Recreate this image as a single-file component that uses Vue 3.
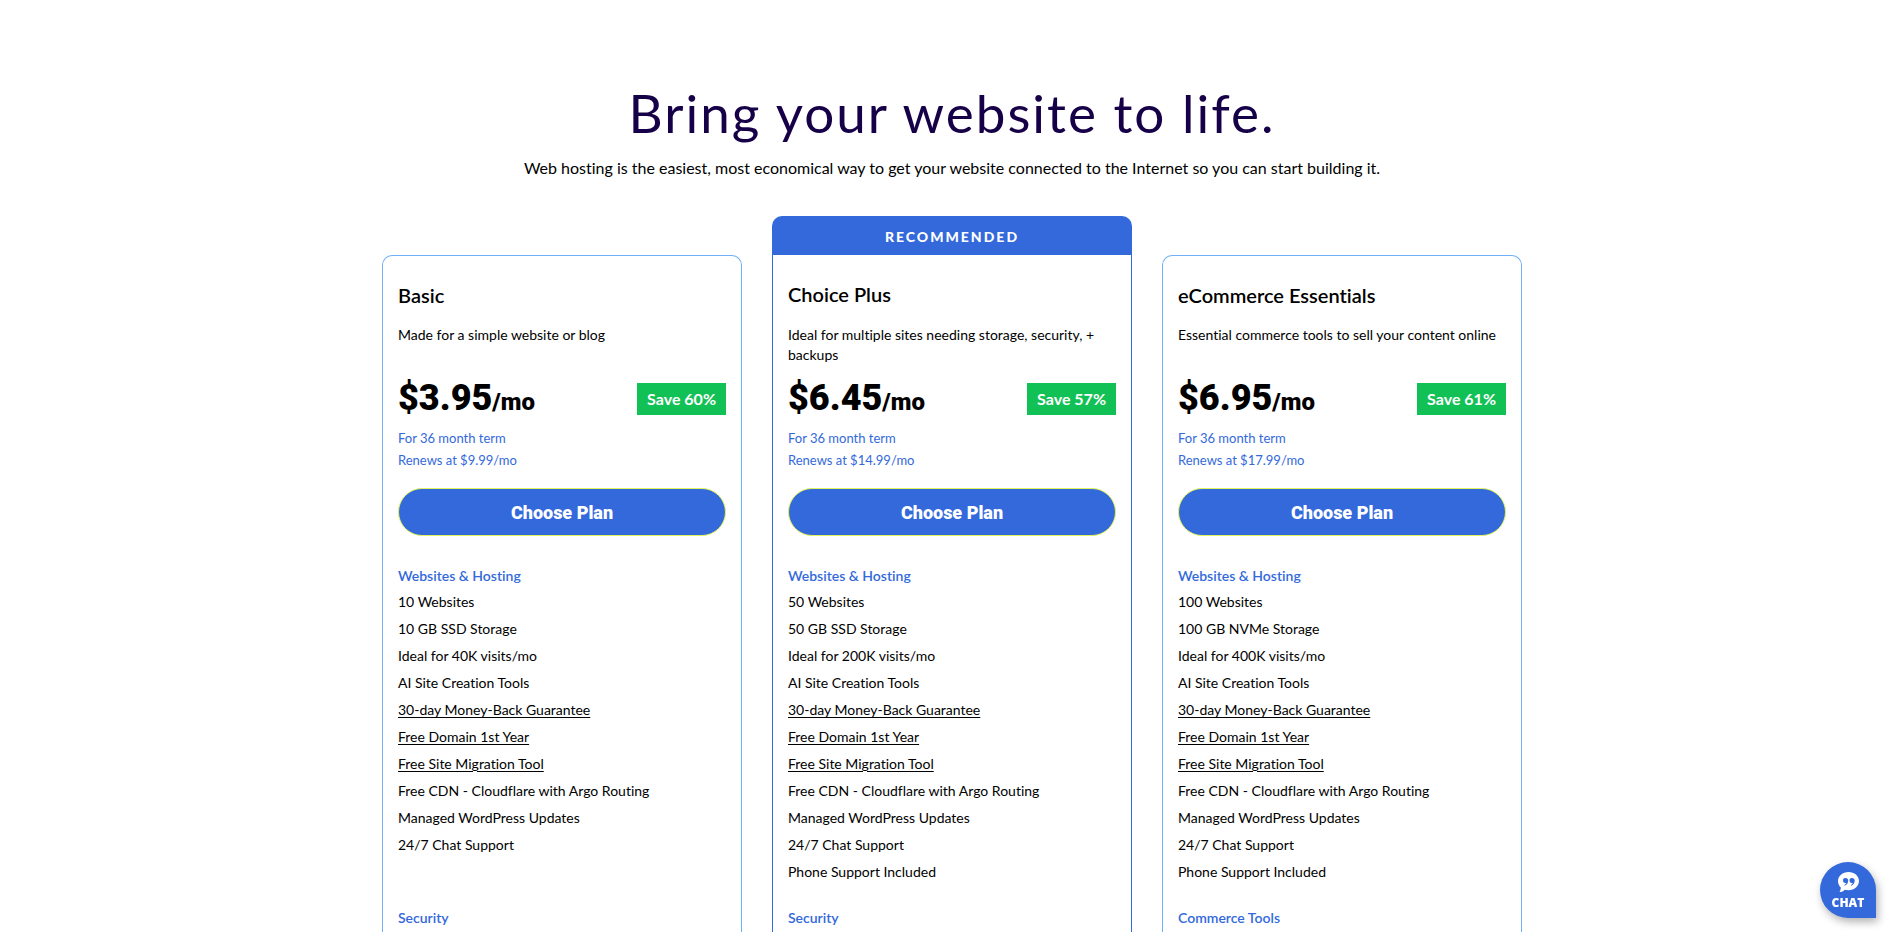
<script setup>
const common = [
  { text: 'AI Site Creation Tools' },
  { text: '30-day Money-Back Guarantee', link: true },
  { text: 'Free Domain 1st Year', link: true },
  { text: 'Free Site Migration Tool', link: true },
  { text: 'Free CDN - Cloudflare with Argo Routing' },
  { text: 'Managed WordPress Updates' },
  { text: '24/7 Chat Support' }
]

const plans = [
  {
    name: 'Basic',
    blurb: 'Made for a simple website or blog',
    price: '$3.95',
    save: 'Save 60%',
    renews: 'Renews at $9.99/mo',
    features: [
      { text: '10 Websites' },
      { text: '10 GB SSD Storage' },
      { text: 'Ideal for 40K visits/mo' },
      ...common
    ],
    next: 'Security'
  },
  {
    name: 'Choice Plus',
    recommended: true,
    blurb: 'Ideal for multiple sites needing storage, security, + backups',
    price: '$6.45',
    save: 'Save 57%',
    renews: 'Renews at $14.99/mo',
    features: [
      { text: '50 Websites' },
      { text: '50 GB SSD Storage' },
      { text: 'Ideal for 200K visits/mo' },
      ...common,
      { text: 'Phone Support Included' }
    ],
    next: 'Security'
  },
  {
    name: 'eCommerce Essentials',
    blurb: 'Essential commerce tools to sell your content online',
    price: '$6.95',
    save: 'Save 61%',
    renews: 'Renews at $17.99/mo',
    features: [
      { text: '100 Websites' },
      { text: '100 GB NVMe Storage' },
      { text: 'Ideal for 400K visits/mo' },
      ...common,
      { text: 'Phone Support Included' }
    ],
    next: 'Commerce Tools'
  }
]
</script>

<template>
  <main class="page">
    <header class="intro">
      <h1>Bring your website to life.</h1>
      <p>Web hosting is the easiest, most economical way to get your website connected to the Internet so you can start building it.</p>
    </header>

    <section class="plans" aria-label="Hosting plans">
      <div v-for="plan in plans" :key="plan.name" class="column">
        <div v-if="plan.recommended" class="ribbon">RECOMMENDED</div>
        <article class="card" :class="{ featured: plan.recommended }">
          <h2>{{ plan.name }}</h2>
          <p class="blurb">{{ plan.blurb }}</p>
          <div class="offer">
            <div class="price">{{ plan.price }}<span>/mo</span></div>
            <div class="save">{{ plan.save }}</div>
          </div>
          <p class="term">For 36 month term</p>
          <p class="term">{{ plan.renews }}</p>
          <button type="button" class="choose">Choose Plan</button>
          <h3>Websites &amp; Hosting</h3>
          <ul class="features">
            <li v-for="f in plan.features" :key="f.text">
              <a v-if="f.link" href="#">{{ f.text }}</a>
              <template v-else>{{ f.text }}</template>
            </li>
          </ul>
          <h3>{{ plan.next }}</h3>
        </article>
      </div>
    </section>

    <button type="button" class="chat">
      <svg viewBox="0 0 22 22" width="22" height="22" aria-hidden="true">
        <path fill="#fff" d="M11.500 1C5.700 1 1 5 1 10c0 2.700 1.100 4.800 2.800 6.500 0 1.600-.5 3-1.300 4.500 2.200 0 4-.9 5.300-2.300 1.200.3 2.400.5 3.700.5C17.300 19.200 22 15.100 22 10S17.300 1 11.500 1z" />
        <path class="quote" d="M8.600 7a2.500 2.500 0 1 0 .6 4.900c-.2.900-.8 1.500-1.700 1.900v1c2.400-.7 3.700-2.500 3.700-5.200C11.200 8 10.200 7 8.600 7zM15.100 7a2.500 2.500 0 1 0 .6 4.900c-.2.900-.8 1.500-1.700 1.900v1c2.400-.7 3.700-2.500 3.700-5.200C17.700 8 16.700 7 15.100 7z" />
      </svg>
      <span>CHAT</span>
    </button>
  </main>
</template>

<style>
body {
  margin: 0;
  background: #fff;
}
</style>

<style scoped>
.page {
  box-sizing: border-box;
  height: 100vh;
  overflow: hidden;
  display: flex;
  flex-direction: column;
  align-items: center;
  padding: 79px 0 0 9px;
  color: #000;
  font-family: Lato, "Liberation Sans", sans-serif;
  font-size: 14px;
  font-variant-ligatures: none;
}

h1,
h2,
h3,
p,
ul {
  margin: 0;
  padding: 0;
}

.intro {
  text-align: center;
}

.intro h1 {
  color: #160048;
  font-size: 53px;
  font-weight: 400;
  line-height: 68px;
  letter-spacing: 2px;
}

.intro p {
  margin-top: 9px;
  font-size: 16px;
  line-height: 24px;
}

.plans {
  flex: 1;
  width: 100%;
  max-width: 1140px;
  margin-top: 36px;
  display: grid;
  grid-template-columns: repeat(3, minmax(0, 1fr));
  gap: 30px;
}

.column {
  display: flex;
  flex-direction: column;
  justify-content: flex-end;
}

.ribbon {
  height: 39px;
  border-radius: 10px 10px 0 0;
  background: #3369db;
  color: #fff;
  font-size: 14px;
  font-weight: 900;
  line-height: 41px;
  letter-spacing: 2px;
  text-align: center;
}

.card {
  box-sizing: border-box;
  height: calc(100% - 39px);
  padding: 25px 15px 0;
  border: 1px solid #71b0f6;
  border-bottom: 0;
  border-radius: 10px 10px 0 0;
}

.card.featured {
  border-color: #3369db;
  border-top: 0;
  border-radius: 0;
}

.card h2 {
  font-size: 20px;
  font-weight: 600;
  line-height: 28px;
}

.blurb {
  min-height: 40px;
  margin-top: 16px;
  line-height: 20px;
}

.card.featured .blurb {
  margin-top: 17px;
}

.offer {
  display: flex;
  align-items: center;
  justify-content: space-between;
  height: 50px;
  margin-top: 9px;
}

.price {
  padding-top: 2px;
  font-family: Roboto, sans-serif;
  font-size: 36px;
  font-weight: 900;
  line-height: 48px;
}

.price span {
  font-size: 24px;
}

.save {
  padding: 0 10px;
  background: #12c155;
  color: #fff;
  font-size: 16px;
  font-weight: 700;
  line-height: 32px;
}

.term {
  color: #3369db;
  font-size: 13px;
  line-height: 22px;
}

.offer + .term {
  margin-top: 3px;
}

.choose {
  display: block;
  width: 100%;
  height: 48px;
  margin: 17px 0 30px;
  padding: 0;
  border: 1px solid #e1f55a;
  border-radius: 24px;
  background: #3369db;
  color: #fff;
  font-family: Roboto, sans-serif;
  font-size: 18px;
  font-weight: 900;
  cursor: pointer;
}

.card h3 {
  color: #3369db;
  font-size: 14px;
  font-weight: 600;
  line-height: 20px;
}

.features {
  min-height: 297px;
  margin: 2px 0 23px;
  list-style: none;
  line-height: 27px;
}

.features a {
  color: inherit;
  text-underline-offset: 2px;
}

.chat {
  position: fixed;
  right: 19px;
  bottom: 14px;
  display: flex;
  flex-direction: column;
  align-items: center;
  width: 56px;
  height: 56px;
  padding: 9px 0 0;
  border: 0;
  border-radius: 28px 28px 0 28px;
  background: #3369db;
  box-shadow: 2px 4px 8px rgba(0, 0, 0, 0.3);
  color: #fff;
  font-family: "Open Sans", sans-serif;
  font-size: 12px;
  font-weight: 800;
  line-height: 20px;
  cursor: pointer;
}

.quote {
  fill: #3369db;
}
</style>
